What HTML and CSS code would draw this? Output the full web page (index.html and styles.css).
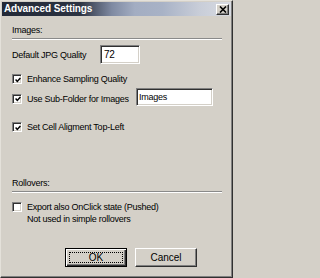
FILE: index.html
```html
<!DOCTYPE html>
<html>
<head>
<meta charset="utf-8">
<link rel="stylesheet" href="styles.css">
</head>
<body>
<div class="window">
  <div class="titlebar">
    <span class="title">Advanced Settings</span>
    <span class="close"><svg width="8" height="7" viewBox="0 0 8 7"><path d="M1 0.5 L7 6.5 M7 0.5 L1 6.5" stroke="#000" stroke-width="1.6" fill="none"/></svg></span>
  </div>
  <div class="content">
    <div class="group-label g1">Images:</div>
    <div class="sep"></div>
    <div class="row jpg">
      <span class="jpg-label">Default JPG Quality</span>
      <span class="field f72">72</span>
    </div>
    <div class="row check r-enh">
      <span class="cb"><svg width="6" height="6" viewBox="0 0 6 6"><path d="M0.6 2.6 L2.3 4.4 L5.4 0.9" stroke="#000" stroke-width="1.5" fill="none"/></svg></span>
      <span class="lbl">Enhance Sampling Quality</span>
    </div>
    <div class="row check r-sub">
      <span class="cb"><svg width="6" height="6" viewBox="0 0 6 6"><path d="M0.6 2.6 L2.3 4.4 L5.4 0.9" stroke="#000" stroke-width="1.5" fill="none"/></svg></span>
      <span class="lbl sub-lbl">Use Sub-Folder for Images</span>
      <span class="field fimg">Images</span>
    </div>
    <div class="row check r-cell">
      <span class="cb"><svg width="6" height="6" viewBox="0 0 6 6"><path d="M0.6 2.6 L2.3 4.4 L5.4 0.9" stroke="#000" stroke-width="1.5" fill="none"/></svg></span>
      <span class="lbl">Set Cell Aligment Top-Left</span>
    </div>
    <div class="group-label g2">Rollovers:</div>
    <div class="sep"></div>
    <div class="row check r-exp">
      <span class="cb"></span>
      <span class="lbl">Export also OnClick state (Pushed)</span>
    </div>
    <div class="note">Not used in simple rollovers</div>
    <div class="buttons">
      <span class="btn default"><span class="focus">OK</span></span>
      <span class="btn">Cancel</span>
    </div>
  </div>
</div>
</body>
</html>
```

FILE: styles.css
```css
html, body {
  margin: 0;
  padding: 0;
  background: #d4d0c8;
}
.window {
  width: 233px;
  height: 278px;
  box-sizing: border-box;
  background: #d4d0c8;
  border-style: solid;
  border-width: 1px;
  border-color: #e4e1da #303030 #303030 #e4e1da;
  box-shadow: inset -1px -1px #808080;
  padding: 1px;
  font-family: "Liberation Sans", Arial, sans-serif;
  font-size: 9px;
  letter-spacing: -0.25px;
  color: #000;
}
.titlebar {
  height: 14px;
  display: flex;
  align-items: center;
  justify-content: space-between;
  background: linear-gradient(90deg, #232937 0%, #2c3342 34%, #7f8aa2 48%, #a3adc2 58%, #a8b2c6 70%, #c8cdd8 86%, #d8dbe2 100%);
  padding: 0 2px 0 2px;
}
.title {
  color: #fff;
  font-weight: bold;
  font-size: 10px;
  letter-spacing: -0.1px;
  line-height: 14px;
}
.close {
  width: 13px;
  height: 11px;
  box-sizing: border-box;
  background: #d4d0c8;
  border-style: solid;
  border-width: 1px;
  border-color: #fff #303030 #303030 #fff;
  box-shadow: inset -1px -1px #808080;
  display: flex;
  align-items: center;
  justify-content: center;
}
.close svg { display: block; }
.content {
  padding-left: 10px;
  padding-right: 9px;
}
.group-label {
  height: 10px;
  line-height: 10px;
}
.g1 { margin-top: 9px; }
.g2 { margin-top: 46px; }
.sep {
  height: 0;
  border-top: 1px solid #8a8a8a;
  border-bottom: 1px solid #fff;
  margin-top: 3px;
}
.row {
  display: flex;
  align-items: center;
  line-height: 10px;
}
.jpg {
  margin-top: 5px;
  height: 19px;
}
.jpg-label {
  width: 88px;
}
.field {
  box-sizing: border-box;
  background: #fff;
  border-style: solid;
  border-width: 1px;
  border-color: #808080 #fff #fff #808080;
  box-shadow: inset 1px 1px #303030, inset -1px -1px #d4d0c8;
  padding-left: 3px;
  display: flex;
  align-items: center;
}
.f72 {
  width: 40px;
  height: 19px;
  font-size: 10px;
}
.fimg {
  width: 77px;
  height: 18px;
  margin-bottom: 3px;
  padding-left: 2px;
}
.cb {
  width: 10px;
  height: 10px;
  box-sizing: border-box;
  background: #fff;
  border-style: solid;
  border-width: 1px;
  border-color: #808080 #fff #fff #808080;
  box-shadow: inset 1px 1px #303030, inset -1px -1px #d4d0c8;
  display: flex;
  align-items: center;
  justify-content: center;
  flex: none;
  padding: 1px 0 0 1px;
}
.cb svg { display: block; }
.lbl {
  margin-left: 5px;
}
.r-enh {
  margin-top: 10px;
  height: 10px;
}
.r-sub {
  margin-top: 4px;
  height: 21px;
}
.sub-lbl {
  width: 109px;
}
.r-cell {
  margin-top: 13px;
  height: 10px;
}
.r-exp {
  margin-top: 9px;
  height: 10px;
}
.note {
  margin-top: 2px;
  margin-left: 15px;
  line-height: 10px;
  height: 10px;
}
.buttons {
  margin-top: 24px;
  padding-left: 53px;
  display: flex;
  gap: 8px;
}
.btn {
  width: 62px;
  height: 19px;
  box-sizing: border-box;
  border-style: solid;
  border-width: 1px;
  border-color: #fff #303030 #303030 #fff;
  box-shadow: inset -1px -1px #808080;
  display: flex;
  align-items: center;
  justify-content: center;
  font-size: 10px;
  letter-spacing: 0;
}
.btn.default {
  border: 1px solid #000;
  box-shadow: inset 1px 1px #fff, inset -1px -1px #303030, inset -2px -2px #808080;
  padding: 3px;
}
.focus {
  flex: 1;
  align-self: stretch;
  border: 1px dotted #000;
  display: flex;
  align-items: center;
  justify-content: center;
}
```
